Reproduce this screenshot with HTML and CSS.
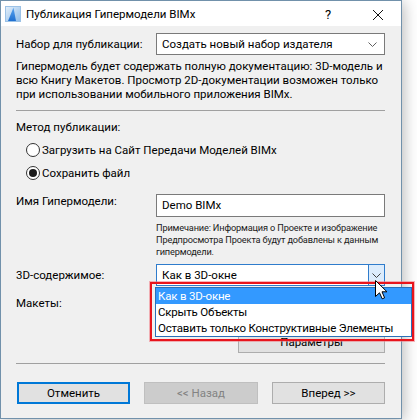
FILE: index.html
```html
<!DOCTYPE html>
<html lang="ru">
<head>
<meta charset="utf-8">
<title>Публикация Гипермодели BIMx</title>
<link rel="stylesheet" href="styles.css">
</head>
<body>
<div class="window">
  <div class="titlebar">
    <svg class="app-icon" width="16" height="16" viewBox="0 0 16 16">
      <defs>
        <linearGradient id="ig" x1="0" y1="0" x2="1" y2="1">
          <stop offset="0" stop-color="#e4f0fb"/>
          <stop offset="1" stop-color="#8dbbe8"/>
        </linearGradient>
        <linearGradient id="sg" x1="0" y1="0" x2="0" y2="1">
          <stop offset="0" stop-color="#5aa5f0"/>
          <stop offset="1" stop-color="#1e6fd0"/>
        </linearGradient>
      </defs>
      <rect x="0.5" y="0.5" width="15" height="15" fill="url(#ig)" stroke="#9cc2e6"/>
      <path d="M3 15 L8.5 1.5 L11 15 Z" fill="url(#sg)"/>
    </svg>
    <span class="title">Публикация Гипермодели BIMx</span>
    <span class="help">?</span>
    <svg class="close" width="12" height="12" viewBox="0 0 12 12"><path d="M1 1 L11 11 M11 1 L1 11" stroke="#111" stroke-width="1"/></svg>
  </div>

  <div class="content">
    <div class="row row-set">
      <span class="label">Набор для публикации:</span>
      <div class="select">
        <span class="select-text">Создать новый набор издателя</span>
        <svg class="chev" width="9" height="5" viewBox="0 0 9 5"><path d="M0.5 0.5 L4.5 4.5 L8.5 0.5" fill="none" stroke="#606060"/></svg>
      </div>
    </div>

    <p class="desc">Гипермодель будет содержать полную документацию: 3D-модель и<br>всю Книгу Макетов. Просмотр 2D-документации возможен только<br>при использовании мобильного приложения BIMx.</p>

    <div class="sep sep-1"></div>

    <div class="group-title">Метод публикации:</div>
    <div class="radio radio-1"><span class="radio-dot"></span><span>Загрузить на Сайт Передачи Моделей BIMx</span></div>
    <div class="radio radio-2"><span class="radio-dot checked"></span><span>Сохранить файл</span></div>

    <div class="row row-name">
      <span class="label">Имя Гипермодели:</span>
      <div class="field-col">
        <div class="input">Demo BIMx</div>
        <p class="note">Примечание: Информация о Проекте и изображение<br>Предпросмотра Проекта будут добавлены к данным<br>гипермодели.</p>
      </div>
    </div>

    <div class="row row-3d">
      <span class="label">3D-содержимое:</span>
      <div class="select select-hover">
        <span class="select-text">Как в 3D-окне</span>
        <span class="arrow-btn"><svg width="9" height="5" viewBox="0 0 9 5"><path d="M0.5 0.5 L4.5 4.5 L8.5 0.5" fill="none" stroke="#404040"/></svg></span>
      </div>
    </div>

    <div class="row row-layouts">
      <span class="label">Макеты:</span>
    </div>
    <div class="params-row">
      <button class="btn btn-params">Параметры</button>
    </div>

    <div class="sep sep-2"></div>

    <div class="footer">
      <button class="btn btn-default">Отменить</button>
      <button class="btn btn-disabled">&lt;&lt; Назад</button>
      <button class="btn">Вперед &gt;&gt;</button>
    </div>
  </div>
</div>

<div class="highlight"></div>
<ul class="dropdown">
  <li class="selected">Как в 3D-окне</li>
  <li>Скрыть Объекты</li>
  <li>Оставить только Конструктивные Элементы</li>
</ul>
<svg class="cursor" width="13" height="20" viewBox="0 0 13 20">
  <path d="M0.5 0.5 L0.5 16.5 L4.5 12.8 L7.2 18.8 L9.6 17.8 L7 11.8 L12 11.8 Z" fill="#fff" stroke="#000" stroke-width="1" stroke-linejoin="miter"/>
</svg>
</body>
</html>
```

FILE: styles.css
```css
* { box-sizing: border-box; }

html, body {
  margin: 0;
  padding: 0;
  background: #ffffff;
}

body {
  width: 417px;
  height: 420px;
  overflow: hidden;
  position: relative;
  font-family: Roboto, "Noto Sans", "Liberation Sans", sans-serif;
  font-size: 11.5px;
  color: #000;
}

.window {
  width: 402px;
  height: 419px;
  border: 1px solid #7191ab;
  background: #f0f0f0;
  box-shadow: 2px 2px 14px rgba(0, 0, 0, 0.28);
  display: flex;
  flex-direction: column;
}

.titlebar {
  height: 25px;
  background: #ffffff;
  display: flex;
  align-items: center;
  padding-left: 4px;
  flex-shrink: 0;
}

.app-icon { margin-top: 1px; }

.title {
  margin-left: 5px;
  font-size: 11.5px;
  line-height: 16px;
  flex: 1;
  margin-top: 1px;
}

.help {
  font-size: 13px;
  width: 20px;
  margin-right: 27px;
  margin-top: 2px;
}

.close { margin-right: 17px; margin-top: 2px; }

.content {
  padding: 7px 15px 0 15px;
  display: flex;
  flex-direction: column;
}

.row {
  display: flex;
}

.label {
  width: 140px;
  flex-shrink: 0;
  line-height: 14px;
  white-space: nowrap;
}

.row-set, .row-3d { align-items: center; height: 22px; }

.select {
  width: 229px;
  height: 22px;
  border: 1px solid #7a7a7a;
  background: #fff;
  display: flex;
  align-items: center;
  padding-left: 5px;
  position: relative;
}

.select-text { flex: 1; white-space: nowrap; line-height: 14px; }

.chev { margin-right: 7px; }

.select-hover { border-color: #2f7ccc; }

.arrow-btn {
  width: 17px;
  height: 22px;
  margin: -1px -1px -1px 0;
  border: 1px solid #2f7ccc;
  background: #dcecfc;
  display: flex;
  align-items: center;
  justify-content: center;
}

.desc {
  margin: 4px 0 0 0;
  line-height: 14px;
  white-space: nowrap;
}

.sep {
  height: 1px;
  background: #a0a0a0;
  width: 369px;
}

.sep-1 { margin-top: 9px; }

.group-title { margin-top: 9px; line-height: 14px; }

.radio {
  display: flex;
  align-items: center;
  height: 16px;
  padding-left: 10px;
  line-height: 14px;
  white-space: nowrap;
}

.radio-1 { margin-top: 8px; }
.radio-2 { margin-top: 7px; }

.radio-dot {
  width: 14px;
  height: 14px;
  border: 1px solid #333;
  border-radius: 50%;
  background: #fff;
  margin-right: 2px;
  display: flex;
  align-items: center;
  justify-content: center;
}

.radio-dot.checked::after {
  content: "";
  width: 8px;
  height: 8px;
  border-radius: 50%;
  background: #1a1a1a;
}

.row-name { margin-top: 13px; }

.field-col { display: flex; flex-direction: column; }

.input {
  width: 229px;
  height: 23px;
  border: 1px solid #7a7a7a;
  background: #fff;
  padding-left: 5px;
  line-height: 21px;
}

.note {
  margin: 5px 0 0 0;
  font-size: 9.2px;
  line-height: 12px;
  white-space: nowrap;
  color: #1a1a1a;
  letter-spacing: -0.15px;
}

.row-3d { margin-top: 6px; }

.row-layouts { margin-top: 10px; }

.params-row {
  display: flex;
  justify-content: flex-end;
  width: 369px;
  margin-top: 21px;
}

.btn {
  font-family: inherit;
  font-size: 11.5px;
  color: #000;
  background: #e1e1e1;
  border: 1px solid #adadad;
  height: 22px;
  padding: 0;
  width: 113px;
  line-height: 14px;
}

.btn-params { width: 147px; }

.sep-2 { margin-top: 10px; }

.footer {
  display: flex;
  gap: 14px;
  margin-top: 18px;
  padding-left: 1px;
}

.btn-default { border: 2px solid #0078d7; }

.btn-disabled {
  background: #cccccc;
  border-color: #bfbfbf;
  color: #838383;
  width: 114px;
}

.highlight {
  position: absolute;
  left: 150px;
  top: 282px;
  width: 264px;
  height: 59px;
  border: 2px solid #e8141c;
  box-shadow: 0 0 0 1px rgba(240, 120, 130, 0.55);
}

.dropdown {
  position: absolute;
  left: 155px;
  top: 287px;
  width: 257px;
  margin: 0;
  padding: 0;
  list-style: none;
  background: #fff;
  border: 1px solid #2a6fb8;
}

.dropdown li {
  height: 16px;
  line-height: 16px;
  padding-left: 2px;
  white-space: nowrap;
  letter-spacing: -0.2px;
}

.dropdown li.selected {
  background: #3399ff;
  color: #fff;
}

.cursor {
  position: absolute;
  left: 375px;
  top: 280px;
}
```
